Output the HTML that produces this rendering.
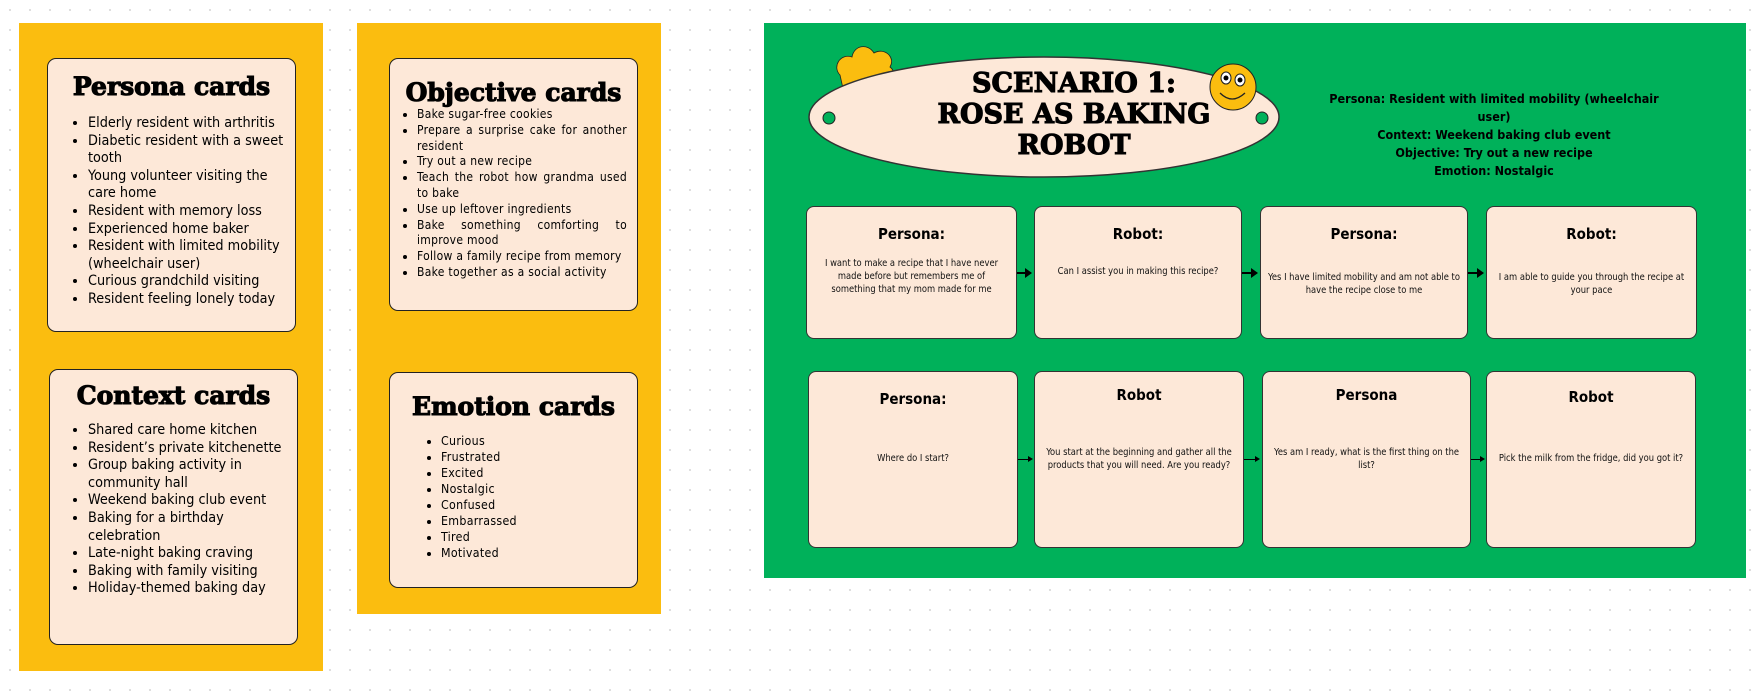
<!DOCTYPE html>
<html><head><meta charset="utf-8"><style>
body{margin:0;width:1753px;height:695px;position:relative;overflow:hidden;background:#fff;
background-image:radial-gradient(#dcdcdc 1px,transparent 1.2px);background-size:20px 20px;font-family:"Liberation Sans",sans-serif;}
.abs{position:absolute;box-sizing:border-box}
.y{background:#fbbd0f}
.card{background:#fde8d8;border:1.5px solid #222;border-radius:9px}
.h{font-family:"DejaVu Serif",serif;font-weight:900;text-align:center;color:#000;-webkit-text-stroke:1.1px #000}
ul{margin:0;padding-left:22px}
.sc{background:#fde8d8;border:1px solid #333;border-radius:8px;text-align:center;font-family:"DejaVu Sans Condensed","DejaVu Sans",sans-serif;}
.sc b{display:block;font-size:15px;font-weight:bold}
.sc p{margin:0;font-size:9.3px;line-height:13px;color:#111;position:absolute;left:6px;right:6px}
.arr{position:absolute;height:2px;background:#000}
.arr:after{content:"";position:absolute;right:-2px;top:-4px;border-left:7px solid #000;border-top:5px solid transparent;border-bottom:5px solid transparent}
.arr.t{height:1px}.arr.t:after{top:-3px;border-left-width:5px;border-top-width:3.5px;border-bottom-width:3.5px}
.ds{font-family:"DejaVu Sans Condensed","DejaVu Sans",sans-serif}
</style></head><body>
<div class="abs y" style="left:19px;top:23px;width:304px;height:648px"></div>
<div class="abs y" style="left:357px;top:23px;width:304px;height:591px"></div>

<div class="abs card" style="left:47px;top:58px;width:249px;height:274px">
<div class="h" style="font-size:25px;margin-top:13px">Persona cards</div>
<ul class="ds" style="font-size:14.3px;line-height:17.6px;margin-top:14px;padding-left:40px;padding-right:4px">
<li>Elderly resident with arthritis</li><li>Diabetic resident with a sweet tooth</li><li>Young volunteer visiting the care home</li><li>Resident with memory loss</li><li>Experienced home baker</li><li>Resident with limited mobility (wheelchair user)</li><li>Curious grandchild visiting</li><li>Resident feeling lonely today</li></ul></div>

<div class="abs card" style="left:49px;top:369px;width:249px;height:276px">
<div class="h" style="font-size:25px;margin-top:11px">Context cards</div>
<ul class="ds" style="font-size:14.3px;line-height:17.6px;margin-top:12px;padding-left:38px;padding-right:6px">
<li>Shared care home kitchen</li><li>Resident’s private kitchenette</li><li>Group baking activity in community hall</li><li>Weekend baking club event</li><li>Baking for a birthday celebration</li><li>Late-night baking craving</li><li>Baking with family visiting</li><li>Holiday-themed baking day</li></ul></div>

<div class="abs card" style="left:389px;top:58px;width:249px;height:253px">
<div class="h" style="font-size:25px;margin-top:19px">Objective cards</div>
<ul class="ds" style="font-size:12px;line-height:15.8px;margin-top:0px;padding-left:27px;padding-right:10px;text-align:justify;letter-spacing:0.3px">
<li>Bake sugar-free cookies</li><li>Prepare a surprise cake for another resident</li><li>Try out a new recipe</li><li>Teach the robot how grandma used to bake</li><li>Use up leftover ingredients</li><li>Bake something comforting to improve mood</li><li>Follow a family recipe from memory</li><li>Bake together as a social activity</li></ul></div>

<div class="abs card" style="left:389px;top:372px;width:249px;height:216px">
<div class="h" style="font-size:25px;margin-top:19px">Emotion cards</div>
<ul class="ds" style="font-size:12.3px;line-height:16px;margin-top:12px;padding-left:51px;letter-spacing:0.3px">
<li>Curious</li><li>Frustrated</li><li>Excited</li><li>Nostalgic</li><li>Confused</li><li>Embarrassed</li><li>Tired</li><li>Motivated</li></ul></div>

<div class="abs" style="left:764px;top:23px;width:982px;height:555px;background:#00b15a"></div>
<svg class="abs" style="left:764px;top:23px" width="982" height="555">
<path d="M76 52 C68 44 76 30 88 34 C90 22 104 20 110 30 C120 24 132 34 126 44 C134 50 128 62 118 58 L80 70 Z" fill="#fbbd0f" stroke="#222" stroke-width="0.8"/>
<ellipse cx="280" cy="94" rx="235" ry="60" fill="#fde8d8" stroke="#333" stroke-width="1.5"/>
<circle cx="65" cy="95" r="6" fill="#00b15a" stroke="#222"/>
<circle cx="498" cy="95" r="6" fill="#00b15a" stroke="#222"/>
<circle cx="469" cy="64" r="23" fill="#fbbd0f" stroke="#222"/>
<ellipse cx="462" cy="55" rx="5" ry="6" fill="#fff" stroke="#222"/><circle cx="462" cy="55" r="2.5" fill="#000"/>
<ellipse cx="476" cy="57" rx="5" ry="6" fill="#fff" stroke="#222"/><circle cx="476" cy="57" r="2.5" fill="#000"/>
<path d="M456 70 Q468 82 481 70" fill="none" stroke="#222" stroke-width="1.3"/>
</svg>
<div class="abs h" style="left:900px;top:68px;width:348px;font-size:27px;line-height:31px">SCENARIO 1:<br>ROSE AS BAKING<br>ROBOT</div>
<div class="abs" style="left:1320px;top:90px;width:348px;text-align:center;font-weight:bold;font-size:12.5px;line-height:18px;font-family:'DejaVu Sans Condensed','DejaVu Sans',sans-serif">Persona: Resident with limited mobility (wheelchair user)<br>Context: Weekend baking club event<br>Objective: Try out a new recipe<br>Emotion: Nostalgic</div>

<div class="abs sc" style="left:806px;top:206px;width:211px;height:133px"><b style="margin-top:18px">Persona:</b><p style="top:50px;left:10px;right:10px">I want to make a recipe that I have never made before but remembers me of something that my mom made for me</p></div>
<div class="abs sc" style="left:1034px;top:206px;width:208px;height:133px"><b style="margin-top:18px">Robot:</b><p style="top:58px">Can I assist you in making this recipe?</p></div>
<div class="abs sc" style="left:1260px;top:206px;width:208px;height:133px"><b style="margin-top:18px">Persona:</b><p style="top:64px">Yes I have limited mobility and am not able to have the recipe close to me</p></div>
<div class="abs sc" style="left:1486px;top:206px;width:211px;height:133px"><b style="margin-top:18px">Robot:</b><p style="top:64px">I am able to guide you through the recipe at your pace</p></div>
<div class="arr" style="left:1017px;top:272px;width:13px"></div>
<div class="arr" style="left:1242px;top:272px;width:14px"></div>
<div class="arr" style="left:1468px;top:272px;width:14px"></div>

<div class="abs sc" style="left:808px;top:371px;width:210px;height:177px"><b style="margin-top:18px">Persona:</b><p style="top:80px">Where do I start?</p></div>
<div class="abs sc" style="left:1034px;top:371px;width:210px;height:177px"><b style="margin-top:14px">Robot</b><p style="top:74px">You start at the beginning and gather all the products that you will need. Are you ready?</p></div>
<div class="abs sc" style="left:1262px;top:371px;width:209px;height:177px"><b style="margin-top:14px">Persona</b><p style="top:74px;left:8px;right:8px">Yes am I ready, what is the first thing on the list?</p></div>
<div class="abs sc" style="left:1486px;top:371px;width:210px;height:177px"><b style="margin-top:16px">Robot</b><p style="top:80px">Pick the milk from the fridge, did you got it?</p></div>
<div class="arr t" style="left:1018px;top:459px;width:13px"></div>
<div class="arr t" style="left:1244px;top:459px;width:14px"></div>
<div class="arr t" style="left:1471px;top:459px;width:12px"></div>
</body></html>
